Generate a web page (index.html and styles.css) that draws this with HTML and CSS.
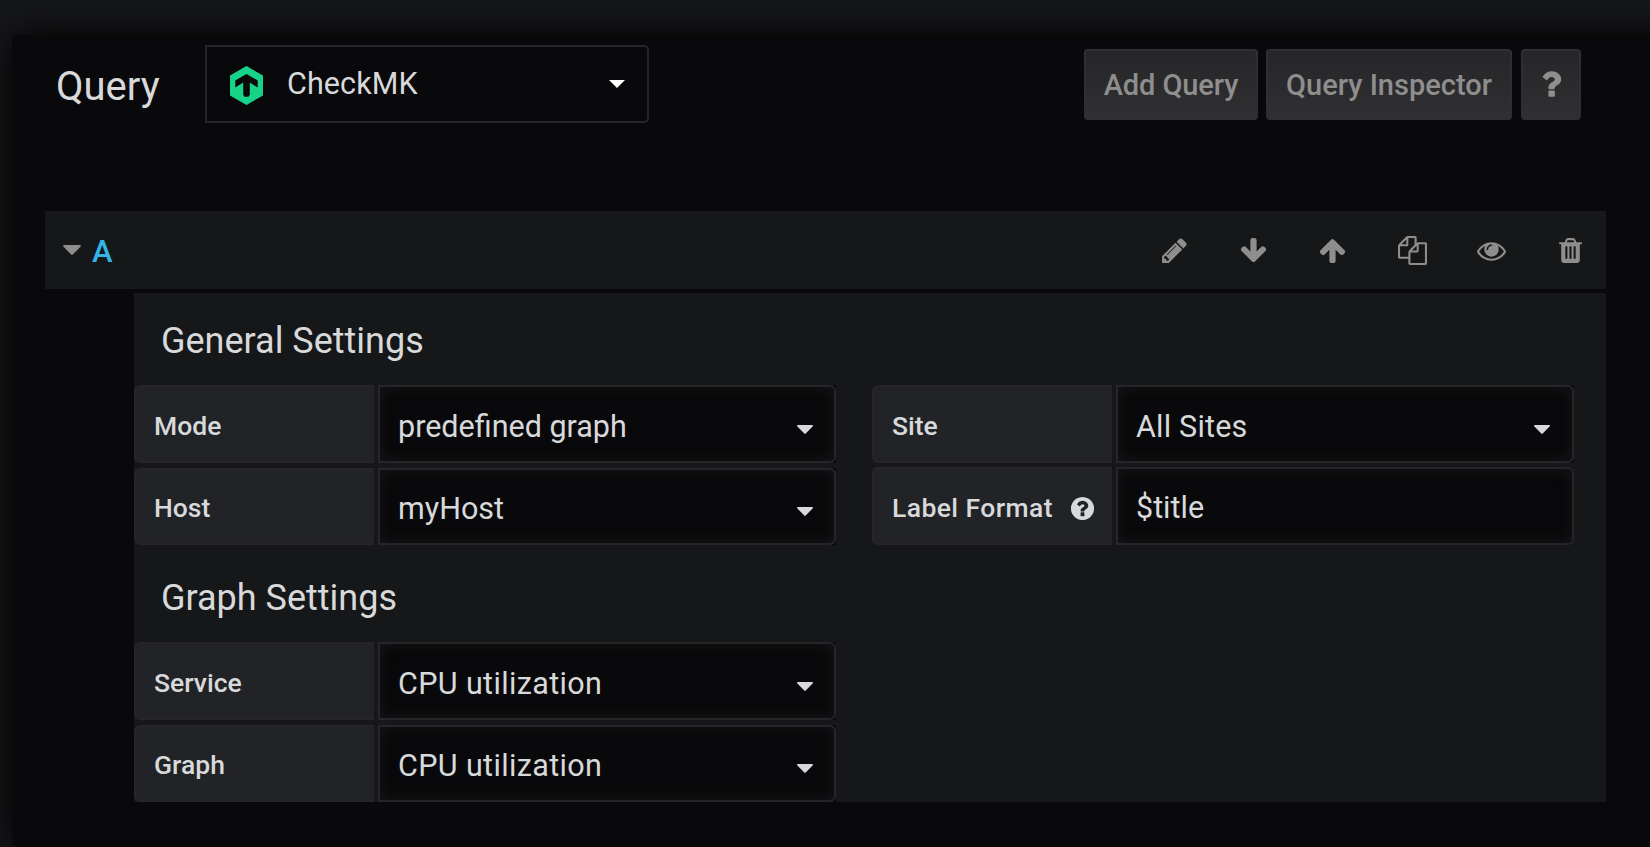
FILE: index.html
```
<!DOCTYPE html>
<html lang="en">
<head>
<meta charset="utf-8">
<title>Query</title>
<link rel="stylesheet" href="styles.css">
</head>
<body>
<svg class="sprite" aria-hidden="true">
  <symbol id="pencil" viewBox="0 0 1792 1792"><path d="M491 1536l91-91-235-235-91 91v107h128v128h107zm523-928q0-22-22-22-10 0-17 7l-542 542q-7 7-7 17 0 22 22 22 10 0 17-7l542-542q7-7 7-17zm-54-192l416 416-832 832h-416v-416zm683 96q0 53-37 90l-166 166-416-416 166-165q36-38 90-38 53 0 91 38l235 234q37 39 37 91z"/></symbol>
  <symbol id="down" viewBox="0 0 1792 1792"><path d="M1675 832q0 53-37 90l-651 652q-39 37-91 37-53 0-90-37l-651-652q-38-36-38-90 0-53 38-91l74-75q39-37 91-37 53 0 90 37l294 294v-704q0-52 38-90t90-38h128q52 0 90 38t38 90v704l294-294q37-37 90-37 52 0 91 37l75 75q37 39 37 91z"/></symbol>
  <symbol id="up" viewBox="0 0 1792 1792"><path d="M1675 971q0 51-37 90l-75 75q-38 38-91 38-54 0-90-38l-294-293v704q0 52-37.500 84.500t-90.500 32.500h-128q-53 0-90.500-32.500t-37.500-84.500v-704l-294 293q-36 38-90 38t-90-38l-75-75q-38-38-38-90 0-53 38-91l651-651q35-37 90-37 54 0 91 37l651 651q37 39 37 91z"/></symbol>
  <symbol id="copy" viewBox="0 0 1792 1792"><path d="M1696 384q40 0 68 28t28 68v1216q0 40-28 68t-68 28h-960q-40 0-68-28t-28-68v-288h-544q-40 0-68-28t-28-68v-672q0-40 20-88t48-76l408-408q28-28 76-48t88-20h416q40 0 68 28t28 68v328q68-40 128-40h416zm-544 213l-299 299h299v-299zm-640-384l-299 299h299v-299zm196 647l316-316v-416h-384v416q0 40-28 68t-68 28h-416v640h512v-256q0-40 20-88t48-76zm956 804v-1152h-384v416q0 40-28 68t-68 28h-416v640h896z"/></symbol>
  <symbol id="eye" viewBox="0 0 1792 1792"><path d="M1664 960q-152-236-381-353 61 104 61 225 0 185-131.500 316.500t-316.500 131.500-316.500-131.500-131.500-316.500q0-121 61-225-229 117-381 353 133 205 333.500 326.500t434.500 121.500 434.500-121.500 333.500-326.500zm-720-384q0-20-14-34t-34-14q-125 0-214.500 89.500t-89.500 214.500q0 20 14 34t34 14 34-14 14-34q0-86 61-147t147-61q20 0 34-14t14-34zm848 384q0 34-20 69-140 230-376.500 368.500t-499.500 138.500-499.500-139-376.500-368q-20-35-20-69t20-69q140-229 376.500-368t499.500-139 499.500 139 376.500 368q20 35 20 69z"/></symbol>
  <symbol id="trash" viewBox="0 0 1792 1792"><path d="M704 1376v-704q0-14-9-23t-23-9h-64q-14 0-23 9t-9 23v704q0 14 9 23t23 9h64q14 0 23-9t9-23zm256 0v-704q0-14-9-23t-23-9h-64q-14 0-23 9t-9 23v704q0 14 9 23t23 9h64q14 0 23-9t9-23zm256 0v-704q0-14-9-23t-23-9h-64q-14 0-23 9t-9 23v704q0 14 9 23t23 9h64q14 0 23-9t9-23zm-544-992h448l-48-117q-7-9-17-11h-317q-10 2-17 11zm928 32v64q0 14-9 23t-23 9h-96v948q0 83-47 143.500t-113 60.500h-832q-66 0-113-58.500t-47-141.500v-952h-96q-14 0-23-9t-9-23v-64q0-14 9-23t23-9h309l70-167q15-37 54-63t79-26h320q40 0 79 26t54 63l70 167h309q14 0 23 9t9 23z"/></symbol>
  <symbol id="help" viewBox="0 0 1792 1792"><path d="M1024 1376v-192q0-14-9-23t-23-9h-192q-14 0-23 9t-9 23v192q0 14 9 23t23 9h192q14 0 23-9t9-23zm256-672q0-88-55.500-163t-138.500-116-170-41q-243 0-371 213-15 24 8 42l132 100q7 6 19 6 16 0 25-12 53-68 86-92 34-24 86-24 48 0 85.500 26t37.500 59q0 38-20 61t-68 45q-63 28-115.500 86.500t-52.500 125.500v36q0 14 9 23t23 9h192q14 0 23-9t9-23q0-19 21.500-49.500t54.500-49.500q32-18 49-28.500t46-35 44.500-48 28-60.500 12.500-81zm384 192q0 209-103 385.500t-279.500 279.500-385.500 103-385.500-103-279.500-279.500-103-385.500 103-385.500 279.500-279.500 385.500-103 385.500 103 279.500 279.500 103 385.500z"/></symbol>
  <symbol id="question" viewBox="0 0 1792 1792"><path d="M1088 1256v240q0 16-12 28t-28 12h-240q-16 0-28-12t-12-28v-240q0-16 12-28t28-12h240q16 0 28 12t12 28zm316-600q0 54-15.500 101t-35 76.500-55 59.500-57.500 43.500-61 35.500q-41 23-68.500 65t-27.500 67q0 17-12 32.500t-28 15.500h-240q-15 0-25.500-18.500t-10.500-37.500v-45q0-83 65-156.500t143-108.500q59-27 84-56t25-76q0-42-46.500-74t-107.500-32q-65 0-108 29-35 25-107 115-13 16-31 16-12 0-25-8l-164-125q-13-10-15.500-25t5.500-28q160-266 464-266 80 0 161 31t146 83 106 127.500 41 158.500z"/></symbol>
  <symbol id="caret" viewBox="0 0 16 9"><path d="M.9 0h14.200q.9 0 .9.800 0 .4-.4.800L8.700 8.600q-.7.600-1.400 0L.4 1.600Q0 1.200 0 .8 0 0 .9 0z"/></symbol>
</svg>
<main class="panel">
  <header class="toolbar">
    <h1 class="title">Query</h1>
    <div class="datasource">
      <svg class="logo" viewBox="0 0 100 118"><path fill="#17d388" fill-rule="evenodd" d="M50 0l50 29v60l-50 29L0 89V29zM50 24L16 44v21l24-15v37l4 6h12l4-6V50l24 15V44z"/></svg>
      <span class="datasource-name">CheckMK</span>
      <svg class="picker-caret" viewBox="0 0 16 8"><path d="M0 0h16L8 8z"/></svg>
    </div>
    <div class="buttons">
      <button class="btn btn-add">Add Query</button>
      <button class="btn btn-inspect">Query Inspector</button>
      <button class="btn btn-help"><svg class="icon"><use href="#question"/></svg></button>
    </div>
  </header>
  <section class="query">
    <div class="query-head">
      <svg class="fold" viewBox="0 0 16 9"><use href="#caret"/></svg>
      <span class="ref">A</span>
      <div class="actions">
        <svg class="icon"><use href="#pencil"/></svg>
        <svg class="icon"><use href="#down"/></svg>
        <svg class="icon"><use href="#up"/></svg>
        <svg class="icon"><use href="#copy"/></svg>
        <svg class="icon"><use href="#eye"/></svg>
        <svg class="icon"><use href="#trash"/></svg>
      </div>
    </div>
    <div class="query-body">
      <h2 class="heading">General Settings</h2>
      <div class="columns">
        <div class="column">
          <div class="field"><label class="label">Mode</label><div class="well"><div class="control"><span>predefined graph</span><svg class="caret"><use href="#caret"/></svg></div></div></div>
          <div class="field short"><label class="label">Host</label><div class="well"><div class="control"><span>myHost</span><svg class="caret"><use href="#caret"/></svg></div></div></div>
        </div>
        <div class="column tight">
          <div class="field"><label class="label">Site</label><div class="well"><div class="control"><span class="site">All Sites</span><svg class="caret"><use href="#caret"/></svg></div></div></div>
          <div class="field"><label class="label wide">Label Format<svg class="help"><use href="#help"/></svg></label><div class="well plain"><div class="control"><span>$title</span></div></div></div>
        </div>
      </div>
      <h2 class="heading second">Graph Settings</h2>
      <div class="columns">
        <div class="column">
          <div class="field"><label class="label">Service</label><div class="well"><div class="control"><span class="metric">CPU utilization</span><svg class="caret"><use href="#caret"/></svg></div></div></div>
          <div class="field short"><label class="label">Graph</label><div class="well"><div class="control"><span class="metric">CPU utilization</span><svg class="caret"><use href="#caret"/></svg></div></div></div>
        </div>
      </div>
    </div>
  </section>
</main>
</body>
</html>
```
FILE: styles.css
```
* { box-sizing: border-box; }
body {
  margin: 0;
  height: 847px;
  padding: 35px 0 0 12px;
  overflow: hidden;
  background: #161719;
  color: #d8d9da;
  font-family: Roboto, sans-serif;
  font-size: 30.500px;
}
svg { display: block; fill: currentColor; flex: none; }
h1, h2 { margin: 0; font-weight: 400; }
.sprite { display: none; }
.panel {
  height: 812px;
  width: 1680px;
  background: #09090b;
  border-radius: 5px;
  box-shadow: 0 0 40px #000;
}
.toolbar {
  display: flex;
  align-items: flex-start;
  width: 1569px;
  height: 176px;
  padding: 10px 0 0 44px;
}
.title {
  width: 149px;
  font-size: 40px;
  line-height: 84px;
}
.datasource {
  display: flex;
  align-items: center;
  width: 444px;
  height: 78px;
  padding: 0 22px 0 23px;
  border: 2px solid #262628;
  border-radius: 0 5px 5px 0;
}
.logo { width: 33px; height: 39px; margin-top: 3px; }
.datasource-name { margin: 0 auto 2px 24px; letter-spacing: .1px; }
.picker-caret { width: 16px; height: 8px; color: #fff; }
.buttons { display: flex; margin: 4px 0 0 auto; }
.btn {
  display: flex;
  align-items: center;
  justify-content: center;
  height: 71px;
  padding: 0;
  border: 2px solid #2f2f32;
  border-radius: 4px;
  background: linear-gradient(#262628, #303033);
  color: #8e8e8e;
  font: 500 29px Roboto, sans-serif;
}
.btn-add { width: 174px; margin-right: 8px; letter-spacing: -.1px; }
.btn-inspect { width: 246px; margin-right: 9px; }
.btn-help { width: 60px; }
.icon { width: 29px; height: 29px; }
.btn-help .icon { width: 36px; height: 36px; margin-bottom: 2px; }
.query { width: 1561px; margin-left: 33px; }
.query-head {
  display: flex;
  align-items: center;
  height: 78px;
  padding: 0 21px 0 18px;
  background: #161719;
}
.fold { width: 18px; height: 10px; color: #8e8e8e; }
.ref { margin: 2px 0 0 11px; color: #33b5e5; font-size: 31px; font-weight: 500; }
.actions { display: flex; gap: 50.200px; margin-left: auto; color: #8e8e8e; }
.query-body {
  height: 509px;
  margin: 4px 0 0 89px;
  background: #161719;
}
.heading {
  height: 92px;
  padding-left: 27px;
  font-size: 36px;
  line-height: 96px;
}
.heading.second { height: 97px; line-height: 106px; }
.columns { display: flex; gap: 36px; }
.column { display: flex; flex-direction: column; gap: 5px; width: 702px; }
.column.tight { gap: 4px; }
.field { display: flex; gap: 4px; height: 78px; }
.field.short { height: 77px; }
.label {
  display: flex;
  align-items: center;
  width: 240px;
  padding: 3px 18px 0 18px;
  border: 2px solid #262628;
  border-right: 0;
  border-radius: 6px 0 0 6px;
  background: #212326;
  font-size: 26.500px;
  font-weight: 500;
}
.label.wide { letter-spacing: .42px; }
.short .label { padding-top: 2px; }
.help { width: 27px; height: 27px; margin: 1px -2px 0 auto; }
.well { width: 458px; background: #09090b; }
.well.plain { background: none; }
.control {
  display: flex;
  align-items: center;
  justify-content: space-between;
  height: 100%;
  padding: 4px 21px 0 18px;
  border: 2px solid #262628;
  border-radius: 0 6px 6px 0;
  background: #09090b;
  box-shadow: inset 0 0 14px #17171a;
}
.plain .control { padding-top: 2px; }
.site { letter-spacing: .2px; }
.metric { letter-spacing: .36px; }
.caret { width: 16px; height: 9px; margin-top: 6px; }
.tight .caret { margin-right: 1px; }
```
